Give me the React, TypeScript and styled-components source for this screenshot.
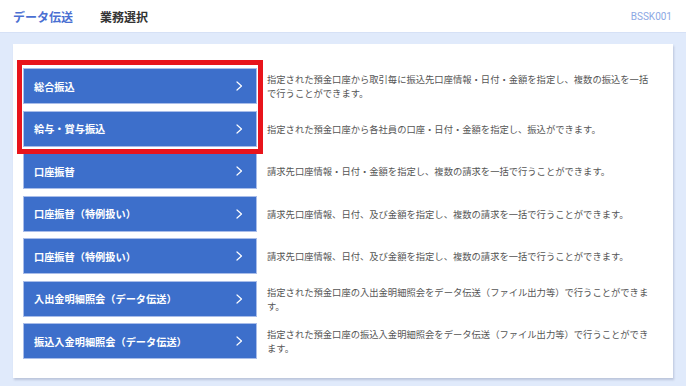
import { createGlobalStyle } from 'styled-components'
import styled from 'styled-components'

const menus = [
    {
        label: '総合振込',
        text: '指定された預金口座から取引毎に振込先口座情報・日付・金額を指定し、複数の振込を一括で行うことができます。',
    },
    {
        label: '給与・賞与振込',
        text: '指定された預金口座から各社員の口座・日付・金額を指定し、振込ができます。',
    },
    {
        label: '口座振替',
        text: '請求先口座情報・日付・金額を指定し、複数の請求を一括で行うことができます。',
    },
    {
        label: '口座振替（特例扱い）',
        text: '請求先口座情報、日付、及び金額を指定し、複数の請求を一括で行うことができます。',
    },
    {
        label: '口座振替（特例扱い）',
        text: '請求先口座情報、日付、及び金額を指定し、複数の請求を一括で行うことができます。',
    },
    {
        label: '入出金明細照会（データ伝送）',
        text: '指定された預金口座の入出金明細照会をデータ伝送（ファイル出力等）で行うことができます。',
    },
    {
        label: '振込入金明細照会（データ伝送）',
        text: '指定された預金口座の振込入金明細照会をデータ伝送（ファイル出力等）で行うことができます。',
    },
]

const Chevron = () => (
    <svg width="7" height="10" viewBox="0 0 7 10" fill="none">
        <path d="M1 1l4.5 4-4.5 4" stroke="#fff" strokeWidth="1.2" strokeLinecap="round" strokeLinejoin="round" />
    </svg>
)

export default function App() {
    return (
        <>
            <GlobalStyle />
            <Header>
                <Title>データ伝送</Title>
                <SubTitle>業務選択</SubTitle>
                <ScreenId>BSSK001</ScreenId>
            </Header>
            <Main>
                <Card>
                    <MenuList>
                        <Highlight />
                        {menus.map((menu, i) => (
                            <Row key={i}>
                                <MenuButton>
                                    <span>{menu.label}</span>
                                    <Chevron />
                                </MenuButton>
                                <Description>{menu.text}</Description>
                            </Row>
                        ))}
                    </MenuList>
                </Card>
            </Main>
        </>
    )
}

const GlobalStyle = createGlobalStyle`
    body {
        margin: 0;
        background: #e0eafb;
        font-family: "Noto Sans CJK JP", "Noto Sans", sans-serif;
    }
`

const Header = styled.header`
    display: flex;
    align-items: center;
    height: 33px;
    padding: 0 14px 0 13px;
    background: #ffffff;
    border-bottom: 1px solid #d6e1f6;
    box-sizing: border-box;
`

const Title = styled.h1`
    margin: 0;
    font-size: 12px;
    font-weight: 700;
    color: #4a6fd2;
`

const SubTitle = styled.h2`
    margin: 0 0 0 27px;
    font-size: 12px;
    font-weight: 700;
    color: #333333;
`

const ScreenId = styled.div`
    margin-left: auto;
    font-family: "Roboto", "Liberation Sans", sans-serif;
    font-size: 10px;
    color: #8ca8e4;
`

const Main = styled.main`
    padding: 11px 13px 9px 13px;
`

const Card = styled.section`
    background: #ffffff;
    padding: 24px 10px 19px;
    box-shadow: 1px 2px 2px rgba(120, 130, 160, 0.35);
`

const MenuList = styled.div`
    position: relative;
    display: flex;
    flex-direction: column;
    gap: 6.5px;
`

const Highlight = styled.div`
    position: absolute;
    top: -8px;
    left: -6px;
    width: 246px;
    height: 94px;
    border: 5px solid #e8141b;
    box-sizing: border-box;
    pointer-events: none;
`

const Row = styled.div`
    display: grid;
    grid-template-columns: 234px 385px;
    column-gap: 10px;
    align-items: center;
`

const MenuButton = styled.div`
    display: flex;
    align-items: center;
    justify-content: space-between;
    height: 36px;
    padding: 0 13px 0 10px;
    background: #3d6fcb;
    border: 1px solid #a9bde9;
    box-sizing: border-box;
    color: #ffffff;
    font-size: 10.2px;
    font-weight: 700;
`

const Description = styled.p`
    margin: 0;
    font-size: 9.3px;
    line-height: 14px;
    color: #555555;
`
